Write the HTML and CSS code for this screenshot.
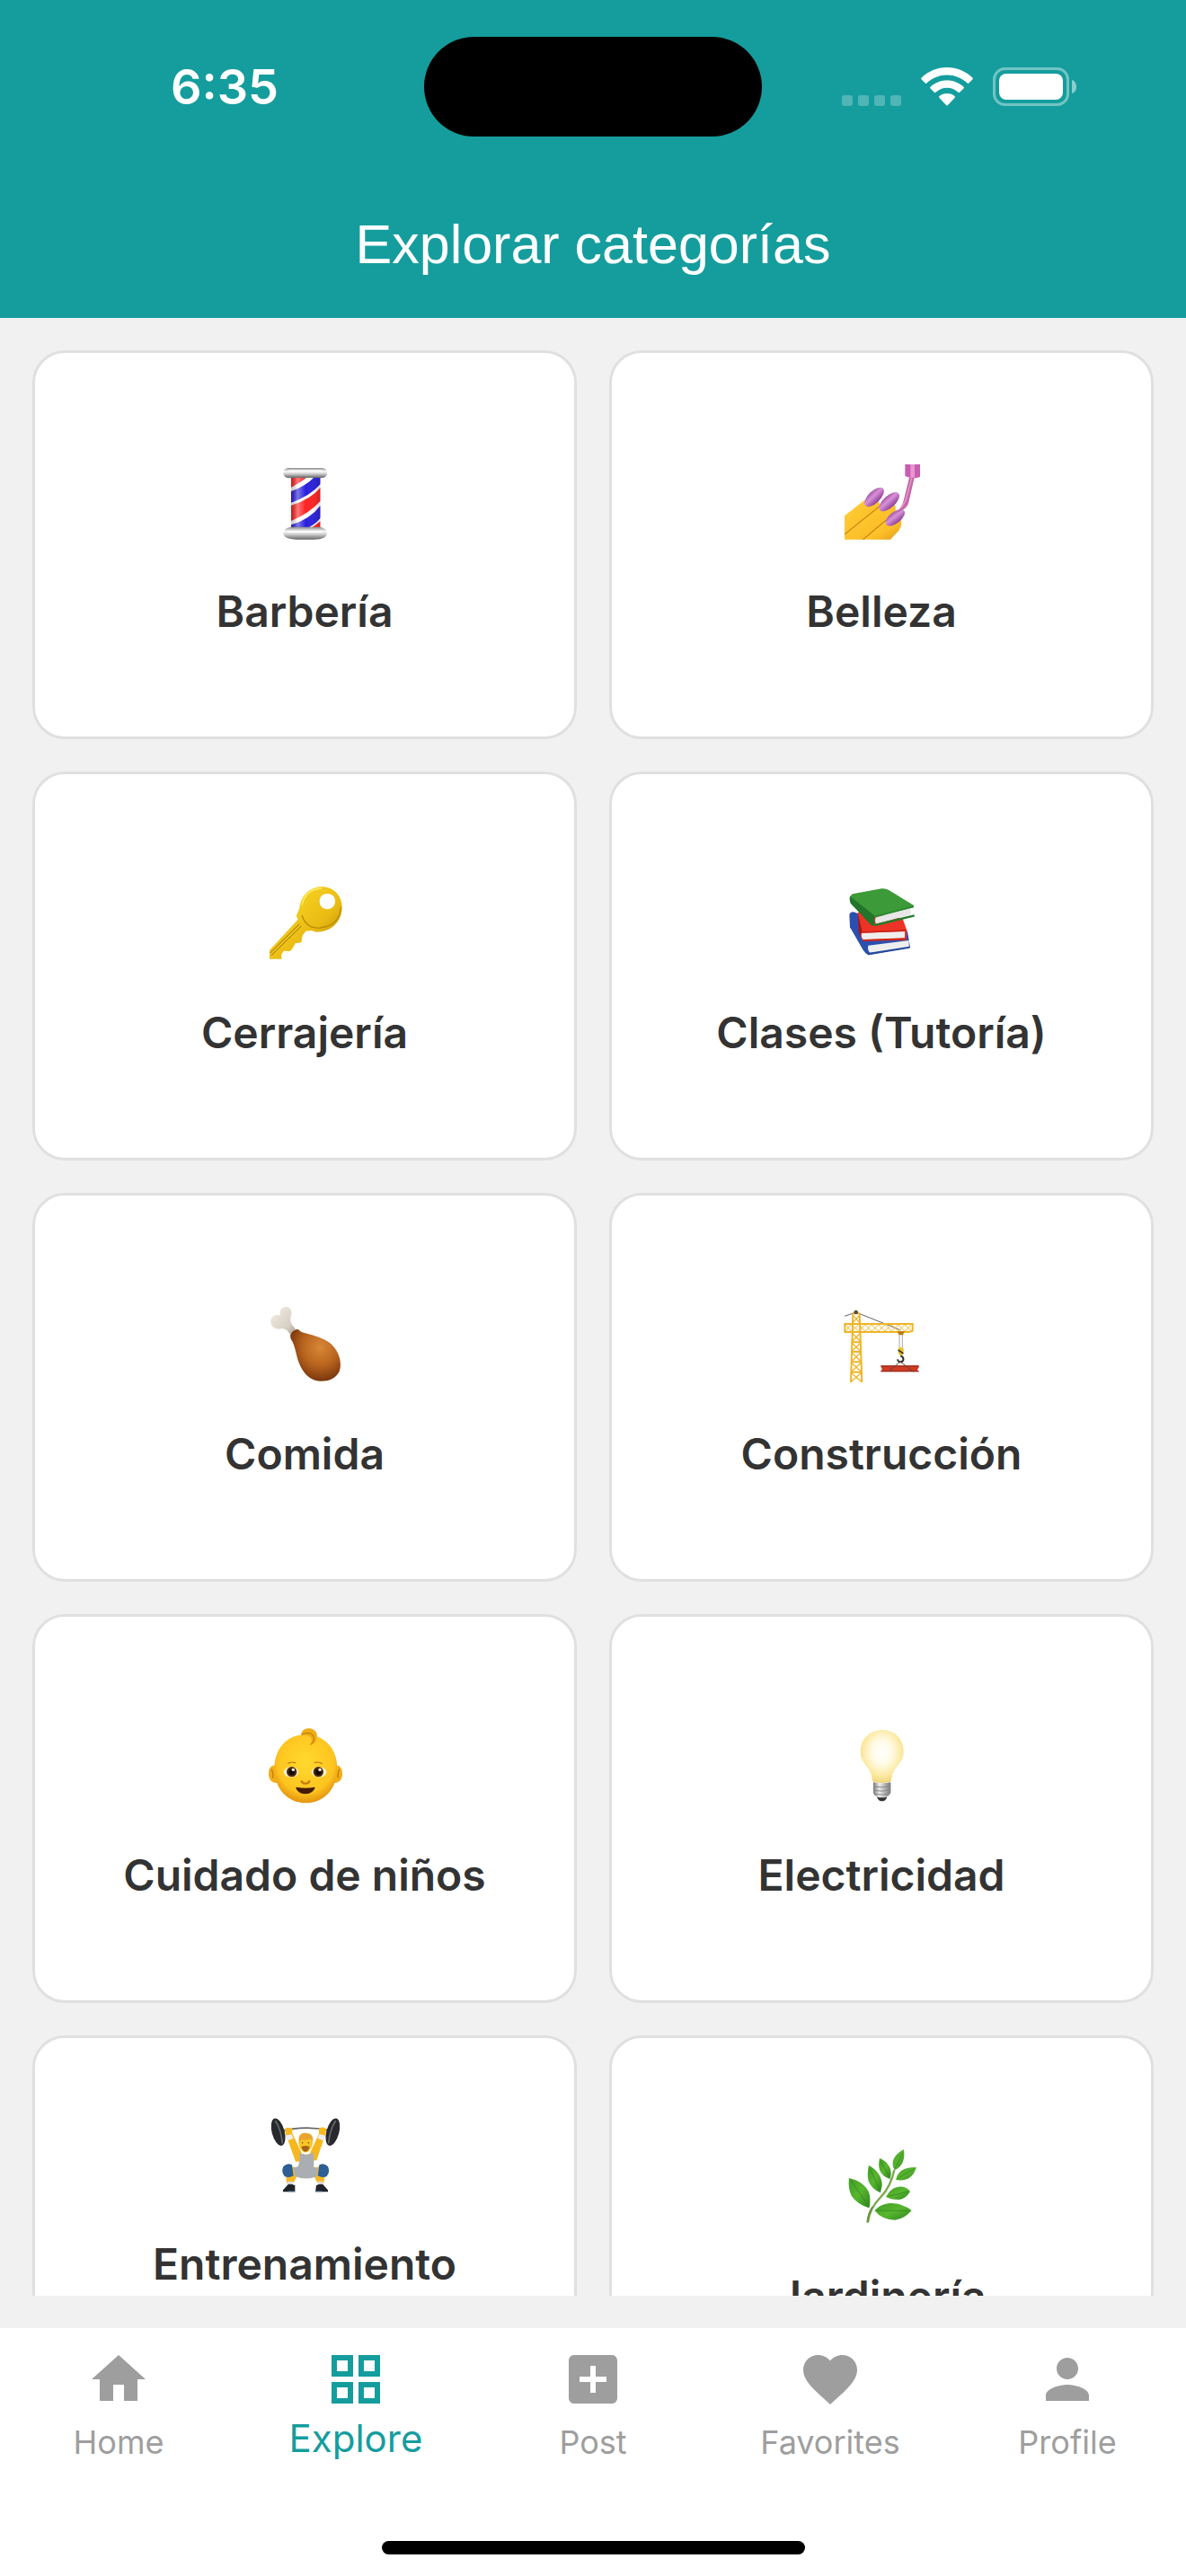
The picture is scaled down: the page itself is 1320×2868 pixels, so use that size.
FILE: index.html
```html
<!DOCTYPE html>

<html lang="es">
  <head>
    <meta charset="utf-8" />
    <meta name="viewport" content="width=device-width, initial-scale=1" />
    <title>Explorar categorías</title>
    <link rel="stylesheet" href="styles.css">
  </head>
  <body>
    <header>
      <div class="status">
        <div class="time">6:35</div>
        <div class="island"></div>
        <div class="signals">
          <svg class="dots" viewBox="0 0 66 43" fill="#fff" fill-opacity=".25">
            <rect y="31" width="12" height="12" rx="3" />
            <rect x="18" y="31" width="12" height="12" rx="3" />
            <rect x="36" y="31" width="12" height="12" rx="3" />
            <rect x="54" y="31" width="12" height="12" rx="3" />
          </svg>
          <svg class="wifi" viewBox="0 0 58 43" fill="#fff">
            <path d="M29 0c11 0 20.500 4.300 28.300 11.400q1 1 0 2l-4 4.100q-.8.800-1.700 0C45.500 11.800 38 8.400 29 8.400S12.500 11.800 6.400 17.500q-.9.800-1.700 0l-4-4.100q-1-1 0-2C8.500 4.300 18 0 29 0z" />
            <path d="M29 14.500c7.300 0 13.500 2.700 18.500 7.200q1 .9 0 1.900l-4.300 4.200q-.8.800-1.700 0C38 24.700 33.800 22.800 29 22.800s-9 1.900-12.500 5q-.9.800-1.700 0l-4.300-4.200q-1-1 0-1.900c5-4.500 11.200-7.200 18.500-7.200z" />
            <path d="M29 29c3.300 0 6.300 1.200 8.500 3q1 .9 0 1.900l-7.500 8q-1 1-2 0l-7.500-8q-1-1 0-1.900c2.200-1.800 5.200-3 8.500-3z" />
          </svg>
          <svg class="battery" viewBox="0 0 94 43">
            <rect x="1.500" y="1.500" width="82" height="40" rx="12" fill="none" stroke="#fff" stroke-opacity=".4" stroke-width="3" />
            <rect x="7" y="7" width="71" height="29" rx="8" fill="#fff" />
            <path d="M88 14c3.500 1 5 4 5 7.500s-1.500 6.500-5 7.500z" fill="#fff" fill-opacity=".5" />
          </svg>
        </div>
      </div>
      <h1>Explorar categorías</h1>
    </header>

    <main>
      <a class="card" href="#barberia">
        <svg class="emoji" viewBox="-3 18 360 360">
          <defs>
            <linearGradient id="metal" x2="0" y2="1">
              <stop offset="0" stop-color="#8a8a8a" />
              <stop offset=".35" stop-color="#fafafa" />
              <stop offset=".6" stop-color="#ccc" />
              <stop offset="1" stop-color="#666" />
            </linearGradient>
            <linearGradient id="glass">
              <stop offset="0" stop-color="#000" stop-opacity=".2" />
              <stop offset=".22" stop-color="#fff" stop-opacity=".4" />
              <stop offset=".5" stop-color="#fff" stop-opacity="0" />
              <stop offset="1" stop-color="#000" stop-opacity=".15" />
            </linearGradient>
            <clipPath id="pole"><path d="M132 120h98v176h-98z" /></clipPath>
          </defs>
          <g clip-path="url(#pole)">
            <path fill="#fff" d="M132 120h98v176h-98z" />
            <path fill="#f22" d="M132 120h55q-25 20-55 35zM132 215q65-20 98-60v45q-35 40-98 67zM185 296q25-10 45-28v28z" />
            <path fill="#2a20dd" d="M132 168q50-18 78-48h20v24q-35 40-98 62zM132 280q65-20 98-65v42q-20 25-55 39h-43z" />
            <path fill="url(#glass)" d="M132 120h98v176h-98z" />
          </g>
          <rect x="106" y="90" width="146" height="33" rx="16" fill="url(#metal)" />
          <path fill="url(#metal)" d="M106 307q0-15 25-20h98q23 5 23 19 0 23-45 23h-55q-46 0-46-22z" />
          <path d="M126 100h108M124 303h108" stroke="#fff" stroke-width="6" stroke-linecap="round" opacity=".7" />
        </svg>
        <span class="label">Barbería</span>
      </a>

      <a class="card" href="#belleza">
        <svg class="emoji" viewBox="3 18 360 360">
          <defs>
            <linearGradient id="skin" x2="1" y2="1">
              <stop offset="0" stop-color="#ffd23b" />
              <stop offset=".6" stop-color="#fcc029" />
              <stop offset="1" stop-color="#e39b17" />
            </linearGradient>
            <linearGradient id="nail" x2="0" y2="1">
              <stop offset="0" stop-color="#a457a8" />
              <stop offset=".4" stop-color="#d892d6" />
              <stop offset="1" stop-color="#8d3f98" />
            </linearGradient>
          </defs>
          <path fill="url(#skin)" d="M120 329l75-66q30-26 52-4 8 20-6 40l-28 30z" />
          <path fill="url(#skin)" d="M60 329v-18l118-98q24-16 50 0 8 18-7 34l-97 82z" />
          <path fill="url(#skin)" d="M60 250l66-52q24-14 46 4 12 12 2 25L60 312z" />
          <path d="M60 312l118-95M122 329l107-90" fill="none" stroke="#b56d0b" stroke-width="3" />
          <g fill="url(#nail)">
            <ellipse cx="159" cy="187" rx="41" ry="20" transform="rotate(-44 159 187)" />
            <ellipse cx="209" cy="203" rx="42" ry="20" transform="rotate(-42 209 203)" />
            <ellipse cx="229" cy="256" rx="38" ry="19" transform="rotate(-38 229 256)" />
          </g>
          <path fill="#c95db2" d="M262 78h50v42q-25 10-50-3z" />
          <path fill="#e797cf" d="M280 78h14v46h-14z" />
          <path fill="#c568a8" d="M276 122h17l-18 79q-4 23-30 34l-12 4q18-15 25-43z" />
          <path d="M284 124l-20 75-16 25" fill="none" stroke="#ee9bd5" stroke-width="4" />
        </svg>
        <span class="label">Belleza</span>
      </a>

      <a class="card" href="#cerrajeria">
        <svg class="emoji" viewBox="-3 15 360 360">
          <defs>
            <linearGradient id="gold" x2="1" y2="1">
              <stop offset="0" stop-color="#ffe02d" />
              <stop offset=".6" stop-color="#e9bb13" />
              <stop offset="1" stop-color="#a87700" />
            </linearGradient>
          </defs>
          <path fill="url(#gold)" fill-rule="evenodd" d="M235 79c39 0 67 30 67 67 0 52-39 84-85 84l-18-5-18 2-11 15-4 23-20 3-8 15-9 11-22-1-8 14 2 13H60v-29l94-102q0-8-5-12l11-27c5-42 35-71 75-71zm17 23c-16 0-25 12-25 25 0 16 11 27 26 27s26-11 26-27-11-25-27-25z" />
          <path d="M62 300l98-97M66 308l100-98" fill="none" stroke="#9b7004" stroke-width="3" />
          <path d="M168 174q15 46 60 42 68-8 70-69" fill="none" stroke="#ba8d06" stroke-width="4" />
          <path d="M168 140q12-54 66-56" fill="none" stroke="#ffef6b" stroke-width="4" />
        </svg>
        <span class="label">Cerrajería</span>
      </a>

      <a class="card" href="#clases">
        <svg class="emoji" viewBox="3 15 360 360">
          <path fill="#2a4fae" d="M76 173q1-9 14-10l180 65 9 54-140 25q-10-5-18-18l-43-75z" />
          <path fill="#eee" d="M139 275l136-17v23l-130 19q-10-10-6-25z" />
          <path fill="#24489c" d="M138 300l139-22v6l-138 23z" />
          <path fill="#ed3326" d="M104 166l10-8 140 27 14 40-2 32-140 3q-10-2-15-25z" />
          <path fill="#a91612" d="M104 166l14 60-3 21-8-18z" />
          <path fill="#eee" d="M117 233l144-5v22l-139 5q-8-10-5-22z" />
          <path d="M119 231l148-6M121 258l144-5" stroke="#c7211a" stroke-width="5" />
          <path fill="#3d9a38" d="M78 112l8-9 98-18q14-1 25 6l82 50-1 7-128 30q-13-2-20-12z" />
          <path fill="#22752a" d="M78 110l82 65v34q-10 2-20-11l-60-64q-5-10-2-24z" />
          <path fill="#e7e7e7" d="M165 180l116-28v20l-116 31q-6-12 0-23z" />
          <path d="M162 207l131-32" stroke="#237c2b" stroke-width="7" />
          <path d="M162 179l128-34" stroke="#29862f" stroke-width="5" />
        </svg>
        <span class="label">Clases (Tutoría)</span>
      </a>

      <a class="card" href="#comida">
        <svg class="emoji" viewBox="-3 12 360 360">
          <defs>
            <radialGradient id="meat" cx=".6" cy=".35" r=".7">
              <stop offset="0" stop-color="#d88838" />
              <stop offset=".5" stop-color="#b9641e" />
              <stop offset="1" stop-color="#70300b" />
            </radialGradient>
            <linearGradient id="bone" x2="1" y2="1">
              <stop offset="0" stop-color="#f3eee6" />
              <stop offset=".7" stop-color="#d7cfc3" />
              <stop offset="1" stop-color="#a99e91" />
            </linearGradient>
          </defs>
          <path fill="url(#bone)" d="M96 100c-4-16 5-28 18-28 18 0 23 18 17 34-4 15 1 21 16 41l-18 18c-9-14-14-20-29-20-21 4-36-7-36-25 0-17 18-24 32-20z" />
          <path fill="url(#meat)" d="M129 168q5-18 25-22 9 10 25 14c37 10 75 20 96 46 20 23 27 59 18 81-11 24-35 33-61 33-32 0-54-20-69-50-16-34-15-68-32-91z" />
          <path d="M133 168q5-12 20-15" fill="none" stroke="#7e3b12" stroke-width="4" />
        </svg>
        <span class="label">Comida</span>
      </a>

      <a class="card" href="#construccion">
        <svg class="emoji" viewBox="3 12 360 360">
          <path d="M60 103l38-13 150 60" fill="none" stroke="#666" stroke-width="3" />
          <g fill="none" stroke="#efb529" stroke-width="6">
            <path d="M88 95l-7 228M110 95l8 228M61 129h226v23l-12 4H61zM87 94h23M82 190h33M82 222h34M81 256h36M80 290h38" />
            <path stroke-width="4" d="M88 100l25 28M110 100l-25 28M84 158l31 32M114 158l-31 32M83 191l33 31M115 191l-33 31M82 223l34 33M116 223l-34 33M81 257l36 33M117 257l-36 33M80 291l38 32M118 291l-38 32" />
            <path stroke-width="3" d="M61 131l22 23 24-23 22 23 22-23 22 23 22-23 22 23 22-23 22 23 22-21M61 154l22-23 24 23 22-23 22 23 22-23 22 23 22-23 22 23 22-23 22 21" />
          </g>
          <circle cx="98" cy="90" r="7" fill="#594c35" />
          <path d="M243 162v47M253 162v47" stroke="#aaa" stroke-width="3" />
          <path fill="#bb7b12" d="M236 154h24l-5 12h-14z" />
          <path fill="#e8c62c" d="M239 210l8-4 10 4v18l-9 9-9-9z" />
          <path d="M239 216l17 12" stroke="#433" stroke-width="5" />
          <path d="M247 235c15 7 10 21-1 21-6 0-9-4-8-9" fill="none" stroke="#333" stroke-width="6" />
          <path fill="#cf3b23" d="M181 268h127v6l-5 8 5 7H181l4-8z" />
          <path d="M181 270h127M181 287h127" stroke="#8f2718" stroke-width="3" />
          <path d="M207 288l39-33 44 34" fill="none" stroke="#62473f" stroke-width="3" />
        </svg>
        <span class="label">Construcción</span>
      </a>

      <a class="card" href="#cuidado">
        <svg class="emoji" viewBox="-3 9 360 360">
          <defs>
            <radialGradient id="face" cx=".5" cy=".4" r=".6">
              <stop offset="0" stop-color="#ffd92f" />
              <stop offset=".75" stop-color="#fec41f" />
              <stop offset="1" stop-color="#e3940f" />
            </radialGradient>
          </defs>
          <path fill="#f0ae1a" d="M80 194c-15-2-23 10-23 28s10 31 27 30zM280 194c15-2 23 10 23 28s-10 31-27 30z" />
          <path d="M66 207q7 8 5 29M294 207q-7 8-5 29" fill="none" stroke="#c97906" stroke-width="4" />
          <path fill="url(#face)" d="M180 91c64 0 106 48 106 113 0 66-43 115-105 115S76 270 76 204C76 139 117 91 180 91z" />
          <path fill="#efac15" d="M165 94c0-17 15-26 29-24 22 3 30 22 22 39-4 10-10 16-21 17 8-13 7-23-2-29q-13-8-28-3z" />
          <path d="M168 90q33-13 40 10 2 16-11 24" fill="none" stroke="#b97108" stroke-width="3" />
          <g fill="#fff4d2"><ellipse cx="132" cy="216" rx="25" ry="17" /><ellipse cx="225" cy="216" rx="25" ry="17" /></g>
          <g fill="#4b2b0c"><circle cx="134" cy="215" r="17" /><circle cx="223" cy="215" r="17" /></g>
          <g fill="#150b05"><circle cx="134" cy="216" r="10" /><circle cx="223" cy="216" r="10" /></g>
          <g fill="#fff"><circle cx="139" cy="208" r="5" /><circle cx="228" cy="208" r="5" /></g>
          <path d="M120 187q13-7 28-2M209 184q15-4 28 4" fill="none" stroke="#b46f09" stroke-width="3" />
          <path d="M167 247q4 8 13 7 9 1 13-7" fill="none" stroke="#c57b0b" stroke-width="7" stroke-linecap="round" />
          <path fill="#431b08" d="M150 266q30 6 60 0 3 1 1 5-10 18-31 18t-31-17q-2-4 1-6z" />
        </svg>
        <span class="label">Cuidado de niños</span>
      </a>

      <a class="card" href="#electricidad">
        <svg class="emoji" viewBox="3 9 360 360">
          <defs>
            <radialGradient id="glow" cx=".5" cy=".42" r=".57">
              <stop offset="0" stop-color="#fff" />
              <stop offset=".4" stop-color="#fffbe7" />
              <stop offset=".8" stop-color="#fbe9a0" />
              <stop offset="1" stop-color="#f0d77c" />
            </radialGradient>
            <linearGradient id="base">
              <stop offset="0" stop-color="#777" />
              <stop offset=".35" stop-color="#eee" />
              <stop offset="1" stop-color="#777" />
            </linearGradient>
          </defs>
          <path fill="url(#glow)" d="M186 75c42 0 71 31 71 73 0 43-39 51-41 96q0 8-31 8t-32-8c-2-45-40-53-40-96 0-42 31-73 73-73z" />
          <path fill="url(#base)" d="M156 250q30 6 58 0v36q-5 10-15 13h-29q-11-3-14-13z" />
          <path d="M157 264q28 6 57-2M157 277q28 6 57-2M159 289q25 6 52-2" fill="none" stroke="#888" stroke-width="3" />
          <path fill="#333" d="M168 299q18 4 34 0-5 14-17 14t-17-14z" />
        </svg>
        <span class="label">Electricidad</span>
      </a>

      <a class="card" href="#entrenamiento">
        <svg class="emoji" viewBox="-3 18 360 360">
          <path d="M94 127q86-24 176-2" fill="none" stroke="#666" stroke-width="5" />
          <path fill="#f7b81f" d="M114 134l21-4 33 70q12 6 26 0l33-70 20 5-30 88-70 4z" />
          <path fill="#eee" d="M113 140l20-6 7 15-20 8zM227 134l20 6-7 17-20-8z" />
          <g fill="#27292c">
            <ellipse cx="89" cy="128" rx="21" ry="47" transform="rotate(-15 89 128)" />
            <ellipse cx="271" cy="128" rx="21" ry="47" transform="rotate(15 271 128)" />
          </g>
          <path d="M79 90q20 30 24 76M281 90q-20 30-24 76" fill="none" stroke="#66696c" stroke-width="5" />
          <path fill="#f8b91d" d="M112 116q12-7 24 2l-1 18-22 2zM225 116q12-7 24 1l-2 20-22-2z" />
          <path fill="#fac528" d="M160 148q20-16 41 0 8 17-3 34-8 14-18 14t-18-14q-9-17-2-34z" />
          <path fill="#e8a52e" d="M158 153c-2-18 15-24 25-21 16 0 26 12 20 28l-5-10q-17 8-31 2l-7 12z" />
          <path d="M170 163v3M190 163v3" stroke="#542d0d" stroke-width="4" />
          <path d="M166 177q14-6 28 0-4 17-14 17t-14-17z" fill="#a76616" />
          <path fill="#f7b822" d="M112 241l53 7-24 49-24 3zM249 241l-54 7 24 49 22 3z" />
          <path fill="#aaaeb3" d="M160 197q6 4 10 4 12 7 26-1l10-4q3 27 2 49 8 3 13 4l-3 27q-36 15-72 0l-7-28 16-5q8-20 5-46z" />
          <path fill="#2c6094" d="M106 243q14-13 29-5l5 36q-15 9-30 2-12-15-4-33zM255 243q-14-13-29-5l-5 36q15 9 30 2 12-15 4-33z" />
          <path fill="#ddd" d="M119 293h20l-3 14h-16zM220 293h19l1 14h-16z" />
          <path fill="#20242a" d="M122 303q10-2 23 3v22h-40v-6zM216 306q12-5 22-3l17 19v6h-42z" />
          <path d="M122 327h23M213 327h22" stroke="#6c9bc2" stroke-width="3" />
        </svg>
        <span class="label two-lines">Entrenamiento</span>
      </a>

      <a class="card" href="#jardineria">
        <svg class="emoji" viewBox="3 6 360 360">
          <defs>
            <linearGradient id="leaf" x2="1" y2="1">
              <stop offset="0" stop-color="#3f9b25" />
              <stop offset=".5" stop-color="#58b62e" />
              <stop offset="1" stop-color="#2f851f" />
            </linearGradient>
          </defs>
          <path d="M138 310q5-47 43-85 33-34 45-90" fill="none" stroke="#78a84b" stroke-width="7" />
          <path d="M136 310q3-32 18-52" fill="none" stroke="#65943c" stroke-width="6" />
          <g fill="url(#leaf)">
            <path d="M75 162c42 9 72 36 70 72q1 17-3 28-41-14-59-41-12-24-8-59z" />
            <path d="M141 120c27 13 45 39 44 67l-5 24q-31-13-40-39-6-25 1-52z" />
            <path d="M177 96c23 8 38 28 38 52l-3 17q-26-7-35-30-5-18 0-39z" />
            <path d="M258 66c4 32-3 56-31 70-15-26-3-52 31-70z" />
            <path d="M300 126c-11 33-32 48-69 42 6-30 30-44 69-42z" />
            <path d="M198 225c15-27 34-37 57-34q17 4 24 16-15 25-38 27-27 0-43-9z" />
            <path d="M160 270c24-26 61-30 92-17q18 6 32 17-24 28-55 32-45-1-69-32z" />
          </g>
          <path d="M83 172l56 82M145 132l34 72M181 106l28 52M254 76l-26 54M292 131l-55 33M272 207l-66 16M275 271l-107-1" fill="none" stroke="#2d7f1d" stroke-width="2" />
        </svg>
        <span class="label">Jardinería</span>
      </a>
    </main>

    <nav>
      <a class="tab" href="#home">
        <svg viewBox="0 0 24 24"><path d="M10 20v-6h4v6h5v-8h3L12 3 2 12h3v8z" /></svg>
        <span>Home</span>
      </a>
      <a class="tab active" href="#explore">
        <svg viewBox="0 0 24 24"><path fill-rule="evenodd" d="M3 3h8v8H3zm2 2v4h4V5zM13 3h8v8h-8zm2 2v4h4V5zM3 13h8v8H3zm2 2v4h4v-4zM13 13h8v8h-8zm2 2v4h4v-4z" /></svg>
        <span>Explore</span>
      </a>
      <a class="tab" href="#post">
        <svg viewBox="0 0 24 24"><path d="M19 3H5c-1.110 0-2 .9-2 2v14c0 1.100.89 2 2 2h14c1.100 0 2-.9 2-2V5c0-1.100-.9-2-2-2zm-2 10h-4v4h-2v-4H7v-2h4V7h2v4h4v2z" /></svg>
        <span>Post</span>
      </a>
      <a class="tab" href="#favorites">
        <svg viewBox="0 0 24 24"><path d="M12 21.350l-1.450-1.320C5.400 15.360 2 12.280 2 8.500 2 5.420 4.420 3 7.500 3c1.740 0 3.410.81 4.500 2.090C13.090 3.810 14.760 3 16.500 3 19.580 3 22 5.420 22 8.500c0 3.780-3.400 6.860-8.550 11.540L12 21.350z" /></svg>
        <span>Favorites</span>
      </a>
      <a class="tab" href="#profile">
        <svg viewBox="0 0 24 24"><path d="M12 12c2.210 0 4-1.790 4-4s-1.790-4-4-4-4 1.790-4 4 1.790 4 4 4zm0 2c-2.670 0-8 1.340-8 4v2h16v-2c0-2.660-5.330-4-8-4z" /></svg>
        <span>Profile</span>
      </a>
    </nav>
    <div class="home-bar"></div>
  </body>
</html>
```
FILE: styles.css
```css
* {
  box-sizing: border-box;
}

body {
  margin: 0;
  height: 100vh;
  display: flex;
  flex-direction: column;
  overflow: hidden;
  background: #f1f1f1;
  color: #333;
  font-family: Inter, "Liberation Sans", sans-serif;
}

a {
  color: inherit;
  text-decoration: none;
}

header {
  flex: none;
  padding: 41px 0 42px;
  background: #159d9d;
  color: #fff;
}

.status {
  display: grid;
  grid-template-columns: 1fr 376px 1fr;
  align-items: center;
  height: 111px;
}

.time {
  padding-left: 28px;
  text-align: center;
  font-size: 54px;
  font-weight: 600;
}

.island {
  height: 111px;
  border-radius: 56px;
  background: #000;
}

.signals {
  display: flex;
  justify-content: flex-end;
  gap: 22px;
  padding-right: 121px;
}

.signals svg {
  height: 43px;
}

.dots {
  width: 66px;
}

.wifi {
  width: 58px;
}

.battery {
  width: 94px;
}

h1 {
  margin: 80px 0 0;
  text-align: center;
  font-family: "Liberation Sans", Arial, sans-serif;
  font-size: 61px;
  line-height: 80px;
  font-weight: 400;
}

main {
  flex: 1;
  min-height: 0;
  display: grid;
  grid-template-columns: 1fr 1fr;
  grid-auto-rows: 433px;
  gap: 36px;
  padding: 36px 36px 0;
  margin-bottom: 36px;
  overflow: hidden;
}

.card {
  display: flex;
  flex-direction: column;
  align-items: center;
  justify-content: center;
  border: 3px solid #e0e0e0;
  border-radius: 36px;
  background: #fff;
}

.emoji {
  width: 120px;
  height: 120px;
  margin-bottom: 28px;
}

.label {
  font-size: 48px;
  font-weight: 600;
  line-height: 72px;
}

.two-lines {
  min-height: 144px;
}

nav {
  flex: none;
  display: flex;
  padding-top: 21px;
  background: #fff;
}

.tab {
  flex: 1;
  display: flex;
  flex-direction: column;
  align-items: center;
  color: #9e9e9e;
  font-size: 36px;
  line-height: 68px;
}

.tab svg {
  width: 72px;
  height: 72px;
  fill: currentColor;
}

.active {
  color: #159d9d;
  font-size: 42px;
  line-height: 60px;
}

.home-bar {
  flex: none;
  padding: 76px 0 24px;
  background: #fff;
}

.home-bar::before {
  content: "";
  display: block;
  width: 471px;
  height: 15px;
  margin: 0 auto;
  border-radius: 8px;
  background: #000;
}
```
